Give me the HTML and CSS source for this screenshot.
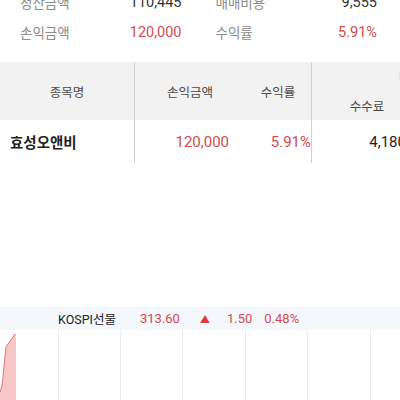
FILE: index.html
```html
<html>
<head>
    <meta charset="utf-8">
    <meta name="viewport" content="width=device-width,initial-scale=1">
    <title>손익</title>
    <link rel="stylesheet" href="styles.css">
</head>
<body>
    <div class="summary">
        <div class="half"><span class="lbl">정산금액</span><span class="val">110,445</span></div>
        <div class="half"><span class="lbl">매매비용</span><span class="val">9,555</span></div>
        <div class="half"><span class="lbl">손익금액</span><span class="val up">120,000</span></div>
        <div class="half"><span class="lbl">수익률</span><span class="val up">5.91%</span></div>
    </div>

    <div class="table">
        <div class="thead">
            <div class="col1 th">종목명</div>
            <div class="col2 split">
                <div class="th w1">손익금액</div>
                <div class="th w2">수익률</div>
            </div>
            <div class="col3">
                <div class="th group">매매비용</div>
                <div class="split">
                    <div class="th w1">수수료</div>
                    <div class="th w1">세금</div>
                </div>
            </div>
        </div>
        <div class="trow">
            <div class="col1 name">효성오앤비</div>
            <div class="col2 split">
                <div class="td w1 up">120,000</div>
                <div class="td w2 up">5.91%</div>
            </div>
            <div class="col3 split">
                <div class="td w1">4,180</div>
                <div class="td w1">5,375</div>
            </div>
        </div>
    </div>

    <div class="ticker">
        <span class="tname">KOSPI선물</span>
        <span class="up price">313.60</span>
        <span class="arrow">▲</span>
        <span class="up diff">1.50</span>
        <span class="up rate">0.48%</span>
    </div>

    <svg class="chart" width="400" height="70" viewBox="0 0 400 70">
        <g stroke="#ececec" stroke-width="1">
            <line x1="58.5" y1="0" x2="58.5" y2="70"/>
            <line x1="120.5" y1="0" x2="120.5" y2="70"/>
            <line x1="182.5" y1="0" x2="182.5" y2="70"/>
            <line x1="245.5" y1="0" x2="245.5" y2="70"/>
            <line x1="307.5" y1="0" x2="307.5" y2="70"/>
            <line x1="370.5" y1="0" x2="370.5" y2="70"/>
        </g>
        <polygon points="0,70 0,62 2,56 6,17 15,4 16,4 16,70" fill="#f7c6c6"/>
        <polyline points="0,62 2,56 6,17 15,4" fill="none" stroke="#dd7777" stroke-width="1"/>
    </svg>
</body>
</html>
```

FILE: styles.css
```css
* {
    font-family: "Roboto", "Noto Sans CJK KR", sans-serif;
    box-sizing: border-box;
}

body {
    margin: 0;
    width: 400px;
    height: 400px;
    overflow: hidden;
    background-color: #ffffff;
    color: #333333;
}

.up {
    color: #d34b4e;
}

/* summary */

.summary {
    display: grid;
    grid-template-columns: 1fr 1fr;
    column-gap: 34px;

    margin-top: -13px;
    padding: 0 23px 0 20px;
}

.half {
    display: flex;
    justify-content: space-between;
    align-items: center;

    height: 30px;
}

.lbl {
    font-size: 13.5px;
    color: #8c8c8c;
}

.val {
    font-size: 14.5px;
}

/* table */

.table {
    margin-top: 15px;
    width: 640px;
}

.thead,
.trow {
    display: flex;
}

.thead {
    height: 58px;
    background-color: #f2f2f2;
}

.trow {
    height: 43px;
}

.col1 {
    width: 134px;
}

.col2 {
    width: 177px;
    border-left: 1px solid #d2d2d2;
}

.col3 {
    width: 221px;
    border-left: 1px solid #d2d2d2;
}

.split {
    display: flex;
}

.th {
    display: flex;
    justify-content: center;
    align-items: center;

    font-size: 12.5px;
    color: #4a4a4a;
}

.thead .col1,
.thead .col2 > .th {
    height: 58px;
}

.group,
.col3 .split .th {
    height: 29px;
}

.w1 {
    width: 110px;
}

.w2 {
    width: 66px;
}

.name {
    display: flex;
    align-items: center;

    padding-left: 10px;

    font-size: 14.5px;
    font-weight: bold;
    color: #222222;
}

.td {
    display: flex;
    justify-content: flex-end;
    align-items: center;

    font-size: 15px;
}

.td.w1 {
    padding-right: 16px;
}

.col3 .td {
    color: #222222;
}

/* ticker */

.ticker {
    display: flex;
    align-items: center;

    height: 23px;
    margin-top: 144px;
    padding-left: 58px;

    background-color: #f4f7fb;

    font-size: 13px;
}

.tname {
    color: #222222;
    font-size: 12.5px;
}

.price {
    margin-left: 24px;
}

.arrow {
    margin-left: 20px;
    font-size: 10px;
    color: #e03a3a;
}

.diff {
    margin-left: 17px;
}

.rate {
    margin-left: 12px;
}

.chart {
    display: block;
}
```
